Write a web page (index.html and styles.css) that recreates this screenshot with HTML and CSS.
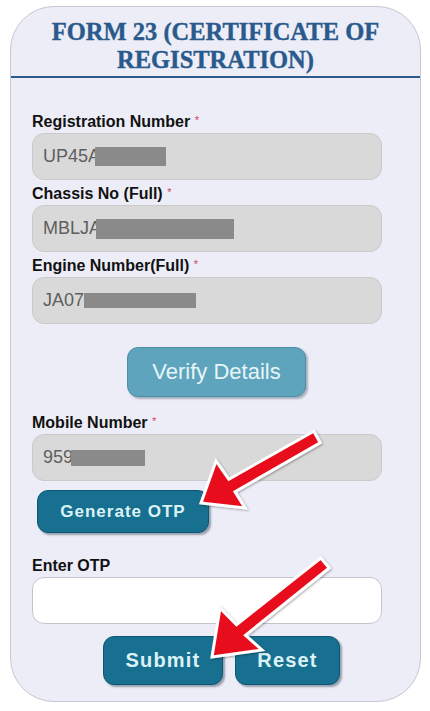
FILE: index.html
```html
<!DOCTYPE html>
<html>
<head>
<meta charset="utf-8">
<link rel="stylesheet" href="styles.css">
</head>
<body>
<div class="card">
  <div class="title">FORM 23 (CERTIFICATE OF<br>REGISTRATION)</div>
  <div class="rule"></div>
  <div class="form">
    <div class="label">Registration Number <span class="req">*</span></div>
    <div class="input gray"><span class="val">UP45A</span><span class="mask m1"></span></div>
    <div class="label">Chassis No (Full) <span class="req">*</span></div>
    <div class="input gray"><span class="val">MBLJA</span><span class="mask m2"></span></div>
    <div class="label">Engine Number(Full) <span class="req">*</span></div>
    <div class="input gray"><span class="val">JA07</span><span class="mask m3"></span></div>
    <div class="row verify-row"><button class="btn verify">Verify Details</button></div>
    <div class="label mobile">Mobile Number <span class="req">*</span></div>
    <div class="input gray"><span class="val">959</span><span class="mask m4"></span></div>
    <div class="row gen-row"><button class="btn dark gen">Generate OTP</button></div>
    <div class="label otp">Enter OTP</div>
    <div class="input white"></div>
    <div class="row submit-row">
      <button class="btn dark big submit">Submit</button>
      <button class="btn dark big reset">Reset</button>
    </div>
  </div>
</div>
<svg class="arrows" width="430" height="711" viewBox="0 0 430 711">
  <defs>
    <filter id="sh" x="-20%" y="-20%" width="140%" height="140%">
      <feDropShadow dx="1" dy="1" stdDeviation="1.2" flood-color="#000" flood-opacity="0.35"/>
    </filter>
  </defs>
  <polygon filter="url(#sh)" points="313.8,431.3 228.8,479.2 216,461 201,503 245,508 235,491.8 320.2,442.7" />
  <polygon filter="url(#sh)" points="320.8,558 236.5,624.8 220,608 212,657 262,650 245.5,635.2 329.2,568" />
</svg>
</body>
</html>
```
FILE: styles.css
```css
html, body {
  margin: 0;
  padding: 0;
  background: #ffffff;
}
body {
  width: 430px;
  height: 711px;
  position: relative;
  overflow: hidden;
}
.card {
  box-sizing: border-box;
  margin: 6px 0 0 10px;
  width: 411px;
  height: 696px;
  border: 1px solid #c6c6d4;
  border-radius: 44px;
  background: #ededf8;
  overflow: hidden;
}
.title {
  padding-top: 11px;
  text-align: center;
  font-family: "Liberation Serif", "Times New Roman", serif;
  font-weight: bold;
  font-size: 24.5px;
  line-height: 28px;
  color: #2a5a8c;
  -webkit-text-stroke: 0.4px #2a5a8c;
}
.rule {
  margin-top: 2px;
  height: 2px;
  background: #2d5b87;
}
.form {
  padding: 34px 39px 0 21px;
  font-family: "Liberation Sans", Arial, sans-serif;
}
.label {
  font-size: 16px;
  font-weight: bold;
  line-height: 20px;
  height: 20px;
  color: #111111;
  margin-bottom: 1px;
}
.req {
  color: #d0445e;
  font-size: 11px;
  font-weight: normal;
  line-height: 0;
  vertical-align: 3px;
}
.input {
  box-sizing: border-box;
  width: 350px;
  height: 47px;
  border-radius: 12px;
  margin-bottom: 4px;
  display: flex;
  align-items: center;
  padding-left: 10px;
}
.gray {
  background: #d9d9d9;
  border: 1px solid #cacaca;
}
.white {
  background: #ffffff;
  border: 1px solid #c4c4cc;
}
.val {
  font-size: 18px;
  color: #5e5e5e;
}
.mask {
  display: inline-block;
  background: #8a8a8a;
}
.m1 { width: 71px; height: 19px; margin-left: -5px; }
.m2 { width: 138px; height: 20px; margin-left: -5px; }
.m3 { width: 112px; height: 15px; margin-left: 0; }
.m4 { width: 74px; height: 16px; margin-left: -2px; }
.row {
  display: flex;
}
.btn {
  box-sizing: border-box;
  font-family: "Liberation Sans", Arial, sans-serif;
  border-radius: 11px;
  padding: 0;
  cursor: pointer;
}
.verify-row {
  margin-top: 23px;
  padding-left: 95px;
}
.verify {
  width: 179px;
  height: 50px;
  background: #5ea4bc;
  border: 1px solid #4c8ea6;
  box-shadow: 2px 2px 2px rgba(40, 60, 80, 0.35);
  color: #e6f5fa;
  font-size: 22px;
}
.mobile {
  margin-top: 16px;
}
.dark {
  background: #17708f;
  border: 1px solid #0f5673;
  box-shadow: 2px 2px 2px rgba(20, 40, 60, 0.4);
  color: #dcf2f7;
  font-weight: bold;
  letter-spacing: 1.2px;
}
.gen-row {
  margin-top: 9px;
  padding-left: 5px;
}
.gen {
  width: 172px;
  height: 43px;
  font-size: 17px;
  letter-spacing: 1px;
}
.otp {
  margin-top: 23px;
}
.submit-row {
  margin-top: 12px;
  padding-left: 71px;
  gap: 12px;
}
.big {
  height: 49px;
  font-size: 20px;
}
.submit { width: 120px; }
.reset { width: 105px; }
.arrows {
  position: absolute;
  left: 0;
  top: 0;
  pointer-events: none;
}
.arrows polygon {
  fill: #e8111b;
  stroke: #ffffff;
  stroke-width: 3;
  stroke-linejoin: miter;
}
```
